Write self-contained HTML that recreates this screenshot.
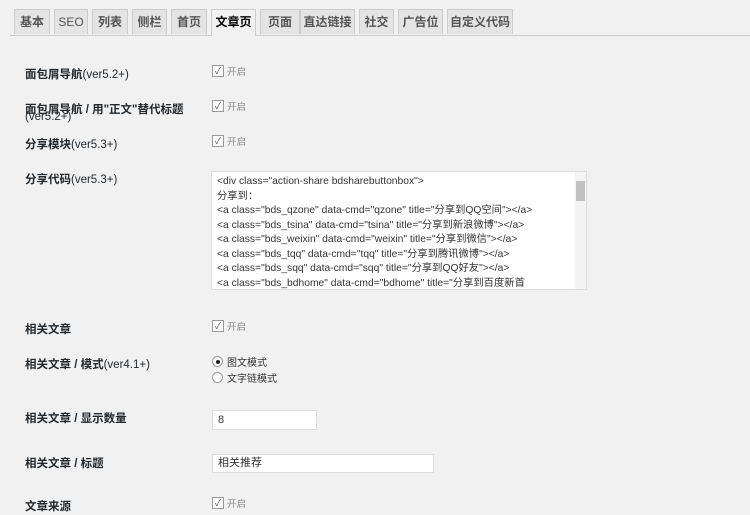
<!DOCTYPE html>
<html><head><meta charset="utf-8"><style>
body{margin:0;width:750px;height:515px;background:#f1f1f1;font-family:"Liberation Sans","Noto Sans CJK SC",sans-serif;position:relative;overflow:hidden;color:#23282d}
.tabs{position:absolute;left:10px;top:35px;width:740px;border-top:1px solid #ccc}
.tab{position:absolute;top:9px;height:25px;background:#e4e4e4;border:1px solid #ccc;border-bottom:none;font-size:12px;font-weight:bold;color:#555;text-align:center;line-height:25px;box-sizing:border-box}
.tab.a{background:#f1f1f1;color:#000;height:27px}
.l{position:absolute;left:25px;font-size:11.5px;font-weight:bold;color:#23282d;white-space:nowrap}
.l span{font-weight:normal}
.cb{position:absolute;left:212px;width:10px;height:10px;border:1px solid #999;background:#fff;font-size:9px;line-height:10px;text-align:center;color:#555}
.ct{position:absolute;left:227px;font-size:9.5px;color:#888}
.ta{position:absolute;left:211px;top:171px;width:376px;height:119px;background:#fff;border:1px solid #ddd;box-sizing:border-box;font-size:10.3px;line-height:14.5px;padding:3px 5px;color:#333;white-space:nowrap;overflow:hidden}
.sb{position:absolute;right:0;top:0;width:11px;height:117px;background:#f4f4f4}
.sb i{position:absolute;left:1px;top:9px;width:9px;height:20px;background:#c1c1c1}
.in{position:absolute;left:212px;background:#fff;border:1px solid #ddd;box-sizing:border-box;font-size:11px;padding-left:5px;color:#333}
.rd{position:absolute;left:212px;width:11px;height:11px;border:1px solid #999;border-radius:50%;background:#fff;box-sizing:border-box}
.rt{position:absolute;left:227px;font-size:10px;color:#333}
</style></head><body>
<div class="tabs"></div>
<div class="tab" style="left:14px;width:36px">基本</div>
<div class="tab" style="left:54px;width:34px;font-weight:normal">SEO</div>
<div class="tab" style="left:92px;width:36px">列表</div>
<div class="tab" style="left:132px;width:35px">侧栏</div>
<div class="tab" style="left:171px;width:36px">首页</div>
<div class="tab a" style="left:211px;width:45px">文章页</div>
<div class="tab" style="left:260px;width:40px">页面</div>
<div class="tab" style="left:300px;width:55px">直达链接</div>
<div class="tab" style="left:359px;width:35px">社交</div>
<div class="tab" style="left:398px;width:45px">广告位</div>
<div class="tab" style="left:447px;width:66px">自定义代码</div>

<div class="l" style="top:66px">面包屑导航<span>(ver5.2+)</span></div>
<div class="cb" style="top:65px">✓</div><div class="ct" style="top:64px">开启</div>
<div class="l" style="top:101px">面包屑导航 / 用"正文"替代标题</div>
<div class="l" style="top:112px;line-height:10px"><span>(ver5.2+)</span></div>
<div class="cb" style="top:100px">✓</div><div class="ct" style="top:99px">开启</div>
<div class="l" style="top:136px">分享模块<span>(ver5.3+)</span></div>
<div class="cb" style="top:135px">✓</div><div class="ct" style="top:134px">开启</div>
<div class="l" style="top:171px">分享代码<span>(ver5.3+)</span></div>
<div class="ta">&lt;div class="action-share bdsharebuttonbox"&gt;<br>分享到：<br>&lt;a class="bds_qzone" data-cmd="qzone" title="分享到QQ空间"&gt;&lt;/a&gt;<br>&lt;a class="bds_tsina" data-cmd="tsina" title="分享到新浪微博"&gt;&lt;/a&gt;<br>&lt;a class="bds_weixin" data-cmd="weixin" title="分享到微信"&gt;&lt;/a&gt;<br>&lt;a class="bds_tqq" data-cmd="tqq" title="分享到腾讯微博"&gt;&lt;/a&gt;<br>&lt;a class="bds_sqq" data-cmd="sqq" title="分享到QQ好友"&gt;&lt;/a&gt;<br>&lt;a class="bds_bdhome" data-cmd="bdhome" title="分享到百度新首<div class="sb"><i></i></div></div>

<div class="l" style="top:321px">相关文章</div>
<div class="cb" style="top:320px">✓</div><div class="ct" style="top:319px">开启</div>
<div class="l" style="top:356px">相关文章 / 模式<span>(ver4.1+)</span></div>
<div class="rd" style="top:356px"><div style="position:absolute;left:2.5px;top:2.5px;width:4px;height:4px;border-radius:50%;background:#222"></div></div>
<div class="rt" style="top:354px">图文模式</div>
<div class="rd" style="top:372px"></div>
<div class="rt" style="top:370px">文字链模式</div>
<div class="l" style="top:410px">相关文章 / 显示数量</div>
<div class="in" style="top:410px;width:105px;height:20px;line-height:18px">8</div>
<div class="l" style="top:455px">相关文章 / 标题</div>
<div class="in" style="top:454px;width:222px;height:19px;line-height:17px">相关推荐</div>
<div class="l" style="top:498px">文章来源</div>
<div class="cb" style="top:497px">✓</div><div class="ct" style="top:496px">开启</div>
</body></html>
